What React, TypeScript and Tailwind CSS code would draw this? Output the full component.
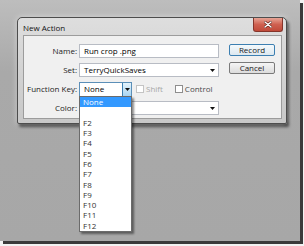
import { ReactNode } from "react";

const keys = ["F2", "F3", "F4", "F5", "F6", "F7", "F8", "F9", "F10", "F11", "F12"];

function Arrow() {
  return (
    <svg width="5" height="3" viewBox="0 0 5 3">
      <path d="M0 0h5L2.5 3z" fill="#111" />
    </svg>
  );
}

function Label({ children }: { children: ReactNode }) {
  return <div className="flex h-[14px] items-center justify-end text-[#1c1c1c]">{children}</div>;
}

function Field({ text, arrow }: { text?: string; arrow?: boolean }) {
  return (
    <div className="flex h-[14px] w-[140px] items-center justify-between border border-[#b8bcc4] bg-white pl-[4px] pr-[3px] text-black">
      <span>{text}</span>
      {arrow && <Arrow />}
    </div>
  );
}

function Check({ label, disabled }: { label: string; disabled?: boolean }) {
  return (
    <div className="flex items-center gap-[2px]">
      <div className={`h-[8px] w-[8px] border bg-white ${disabled ? "border-[#c4c4c4]" : "border-[#8e8e8e]"}`} />
      <span className={disabled ? "text-[#a8a8a8]" : "text-[#4a4a4a]"}>{label}</span>
    </div>
  );
}

export default function App() {
  return (
    <div className="h-[246px] w-[304px] bg-[#f2f2f2] font-['Open_Sans',sans-serif] text-[8px] leading-none">
      <div className="h-[241px] w-[300px] bg-gradient-to-b from-[#bdbdbd] via-[#a9a9a9] via-30% to-[#a7a7a7] pl-[17px] pt-[17px] shadow-[3px_3px_0_#3a3a3a]">
        <div className="w-[270px] rounded-b-[2px] rounded-t-[5px] border border-[#4d4d4d] bg-gradient-to-b from-[#dedede] to-[#c8c8c8] shadow-[0_0_6px_rgba(255,255,255,0.45),2px_3px_3px_rgba(0,0,0,0.65)]">
          {/* title bar */}
          <div className="flex h-[17px] items-start justify-between pl-[5px] pr-[3px]">
            <span className="mt-[6px] text-[#111]">New Action</span>
            <div className="flex h-[14px] w-[30px] items-center justify-center rounded-b-[3px] border border-t-0 border-[#86352b] bg-gradient-to-b from-[#e6a496] via-[#cf6050] to-[#c04a3a]">
              <svg width="8" height="7" viewBox="0 0 8 7">
                <path d="M1 1l6 5M7 1L1 6" stroke="#5a1a12" strokeWidth="2.6" strokeLinecap="round" />
                <path d="M1 1l6 5M7 1L1 6" stroke="#fff" strokeWidth="1.5" strokeLinecap="round" />
              </svg>
            </div>
          </div>

          {/* frame + content */}
          <div className="pb-[4px] pl-[5px] pr-[4px]">
            <div className="relative flex border border-[#9c9c9c] bg-[#f0f0f0] pb-[3px] pt-[8px]">
              <div className="grid grid-cols-[53px_auto] gap-x-[2px] gap-y-[5px]">
                <Label>Name:</Label>
                <Field text="Run crop .png" />
                <Label>Set:</Label>
                <Field text="TerryQuickSaves" arrow />
                <Label>Function Key:</Label>
                <div className="flex h-[14px] items-center">
                  <div className="flex h-[15px] w-[53px] items-stretch border border-[#5b8fb8] bg-white">
                    <span className="flex flex-1 items-center pl-[4px] text-black">None</span>
                    <div className="flex w-[9px] items-center justify-center border-l border-[#3c7fb1] bg-gradient-to-b from-[#e3f3fc] to-[#a9d5f1]">
                      <Arrow />
                    </div>
                  </div>
                  <div className="ml-[4px] flex items-center gap-[12px]">
                    <Check label="Shift" disabled />
                    <Check label="Control" />
                  </div>
                </div>
                <Label>Color:</Label>
                <Field arrow />
              </div>

              <div className="ml-[10px] flex flex-col gap-[6px]">
                <button className="flex h-[12px] w-[46px] items-center justify-center rounded-[2px] border border-[#3c7fb1] bg-gradient-to-b from-[#f4f9fc] to-[#dde8ef] text-[#1a1a1a]">
                  Record
                </button>
                <button className="flex h-[12px] w-[46px] items-center justify-center rounded-[2px] border border-[#7a7a7a] bg-gradient-to-b from-[#f5f5f5] to-[#dcdcdc] text-[#1a1a1a]">
                  Cancel
                </button>
              </div>

              {/* open dropdown list */}
              <div className="absolute left-[55px] top-[60px] w-[53px] border border-[#6b6b6b] bg-white shadow-[2px_2px_2px_rgba(0,0,0,0.45)]">
                <div className="flex h-[10.3px] items-center bg-[#3399ff] pl-[3px] text-white">None</div>
                <div className="h-[10.3px]" />
                {keys.map((k) => (
                  <div key={k} className="flex h-[10.3px] items-center pl-[3px] text-[#333]">
                    {k}
                  </div>
                ))}
              </div>
            </div>
          </div>
        </div>
      </div>
    </div>
  );
}
